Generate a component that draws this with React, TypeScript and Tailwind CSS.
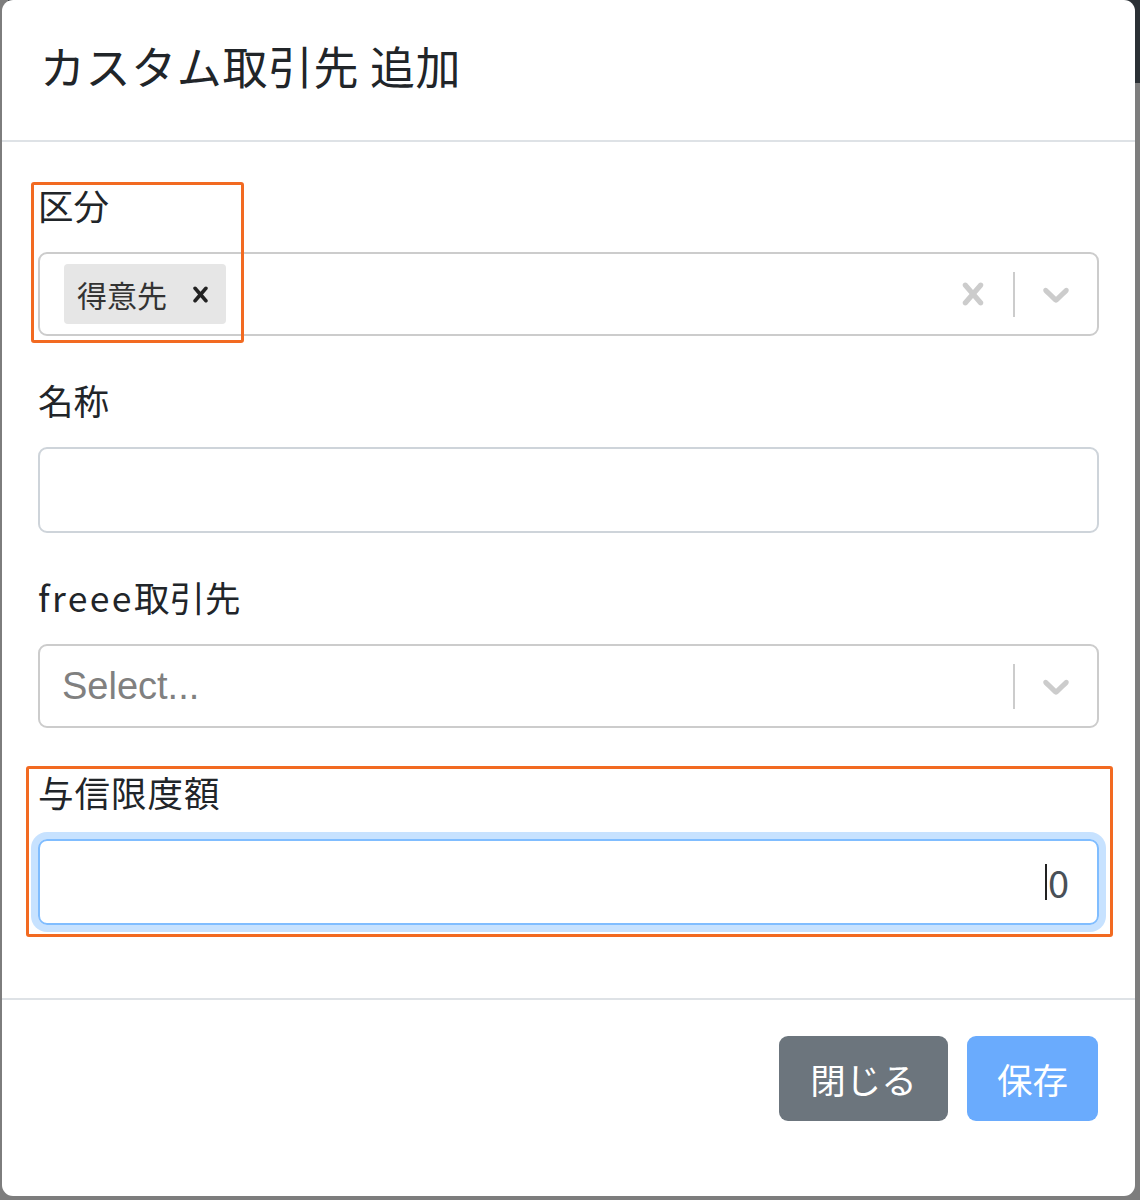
import React from 'react';

const JP = "font-['Noto_Sans_CJK_JP','Noto_Sans',sans-serif]";

// react-select style icons, scaled ~2.2x
const CROSS =
  'M14.348 14.849c-0.469 0.469-1.229 0.469-1.697 0l-2.651-3.030-2.651 3.029c-0.469 0.469-1.229 0.469-1.697 0-0.469-0.469-0.469-1.229 0-1.697l2.758-3.15-2.759-3.152c-0.469-0.469-0.469-1.228 0-1.697s1.228-0.469 1.697 0l2.652 3.031 2.651-3.031c0.469-0.469 1.228-0.469 1.697 0s0.469 1.229 0 1.697l-2.758 3.152 2.758 3.15c0.469 0.469 0.469 1.229 0 1.698z';
const CHEVRON =
  'M4.516 7.548c0.436-0.446 1.043-0.481 1.576 0l3.908 3.747 3.908-3.747c0.533-0.481 1.141-0.446 1.574 0 0.436 0.445 0.408 1.197 0 1.615-0.406 0.418-4.695 4.502-4.695 4.502-0.217 0.223-0.502 0.335-0.787 0.335s-0.57-0.112-0.789-0.335c0 0-4.287-4.084-4.695-4.502s-0.436-1.17 0-1.615z';

function Icon({ d, size, color }: { d: string; size: number; color: string }) {
  return (
    <svg width={size} height={size} viewBox="0 0 20 20" fill={color} aria-hidden="true">
      <path d={d} />
    </svg>
  );
}

function Label({ children }: { children: React.ReactNode }) {
  return <div className="h-[53px] mb-[18px] text-[35.5px] leading-[47px] text-[#212529]">{children}</div>;
}

function Indicators({ clearable }: { clearable?: boolean }) {
  return (
    <div className="flex items-center h-full shrink-0">
      {clearable && (
        <div className="w-[80px] flex justify-center">
          <Icon d={CROSS} size={44} color="#cccccc" />
        </div>
      )}
      <div className="w-[2px] h-[45px] bg-[#cccccc]" />
      <div className="w-[82px] flex justify-center">
        <Icon d={CHEVRON} size={44} color="#cccccc" />
      </div>
    </div>
  );
}

export default function App() {
  return (
    <div className={`relative w-[1140px] h-[1200px] overflow-hidden bg-[#7d7d7d] ${JP}`}>
      {/* dimmed page behind the backdrop */}
      <div className="ml-[8px] h-[83px] bg-[#2b3035]" />

      {/* modal */}
      <div className="absolute top-0 left-[2px] w-[1133px] h-[1196px] bg-white rounded-[11px] flex flex-col">
        <div className="h-[142px] px-[38px] pt-[33px] border-b-2 border-[#dee2e6]">
          <h5 className="text-[45px] leading-[66px] tracking-[0.6px] text-[#212529] font-normal">カスタム取引先 追加</h5>
        </div>

        <div className="px-[36px] pt-[39px] flex flex-col gap-[40px] h-[856px]">
          <div>
            <Label>区分</Label>
            <div className="h-[84px] border-2 border-[#cccccc] rounded-[9px] flex items-center">
              <div className="flex-1 pl-[24px] flex items-center">
                <div className="h-[60px] bg-[#e6e6e6] rounded-[4px] flex items-center">
                  <span className="pl-[13px] pr-[7px] text-[30px] text-[#333333]">得意先</span>
                  <span className="w-[52px] h-full flex items-center justify-center">
                    <Icon d={CROSS} size={31} color="#222222" />
                  </span>
                </div>
              </div>
              <Indicators clearable />
            </div>
          </div>

          <div>
            <Label>名称</Label>
            <div className="h-[86px] border-2 border-[#ced4da] rounded-[9px]" />
          </div>

          <div>
            <Label>
              <span className="tracking-[2.4px]">freee</span>取引先
            </Label>
            <div className="h-[84px] border-2 border-[#cccccc] rounded-[9px] flex items-center">
              <div className="flex-1 pl-[22px] text-[38px] text-[#808080] font-['Liberation_Sans',sans-serif]">
                Select...
              </div>
              <Indicators />
            </div>
          </div>

          <div>
            <Label>
              <span className="tracking-[1px]">与信限度額</span>
            </Label>
            <div className="h-[86px] border-2 border-[#80bdff] rounded-[9px] shadow-[0_0_0_7px_rgba(0,123,255,0.22)] flex items-center justify-end pr-[28px]">
              <span className="w-[1.5px] h-[36px] bg-[#222222] mr-[1px]" />
              <span className="text-[38px] leading-[40px] text-[#495057]">0</span>
            </div>
          </div>
        </div>

        <div className="border-t-2 border-[#dee2e6] pt-[36px] pr-[37px] flex justify-end gap-[19px]">
          <button className="w-[169px] h-[85px] rounded-[9px] bg-[#6c757d] text-white text-[35.5px]">閉じる</button>
          <button className="w-[131px] h-[85px] rounded-[9px] bg-[#6aabfd] text-white text-[35.5px]">保存</button>
        </div>
      </div>

      {/* annotation frames */}
      <div className="absolute left-[31px] top-[182px] w-[213px] h-[161px] border-[3px] border-[#f26a21] rounded-[3px]" />
      <div className="absolute left-[26px] top-[766px] w-[1087px] h-[171px] border-[3px] border-[#f26a21] rounded-[3px]" />
    </div>
  );
}
